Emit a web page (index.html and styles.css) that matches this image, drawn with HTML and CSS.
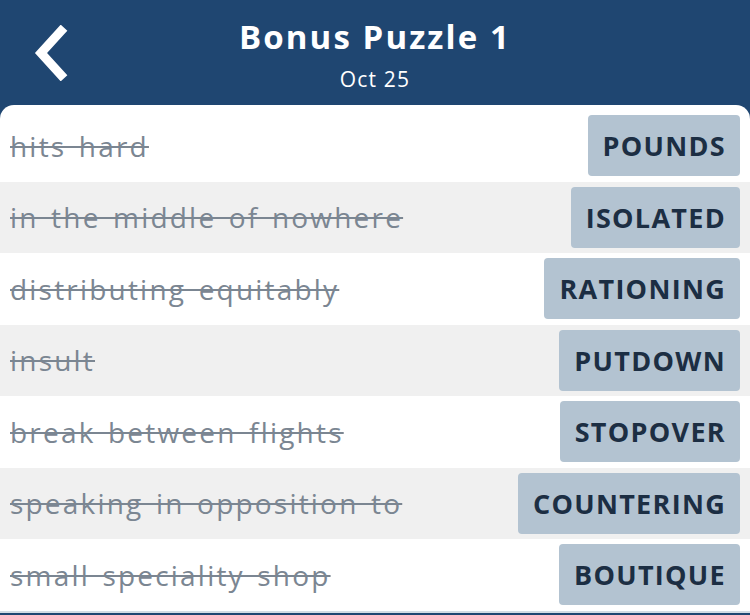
FILE: index.html
```html
<!DOCTYPE html>
<html lang="en">
<head>
  <meta charset="UTF-8">
  <title>Bonus Puzzle 1</title>
  <link rel="stylesheet" href="styles.css">
</head>
<body>
  <header class="topbar">
    <a class="back" href="#">
      <svg width="36" height="56" viewBox="0 0 36 56">
        <path d="M29 6 L9 28 L29 50" fill="none" stroke="#fff" stroke-width="9" stroke-linecap="square" stroke-linejoin="miter"/>
      </svg>
    </a>
    <div class="titles">
      <h1>Bonus Puzzle 1</h1>
      <div class="date">Oct 25</div>
    </div>
  </header>

  <main class="clues">
    <div class="clue"><span class="text">hits hard</span><span class="answer">POUNDS</span></div>
    <div class="clue"><span class="text">in the middle of nowhere</span><span class="answer">ISOLATED</span></div>
    <div class="clue"><span class="text">distributing equitably</span><span class="answer">RATIONING</span></div>
    <div class="clue"><span class="text">insult</span><span class="answer">PUTDOWN</span></div>
    <div class="clue"><span class="text">break between flights</span><span class="answer">STOPOVER</span></div>
    <div class="clue"><span class="text">speaking in opposition to</span><span class="answer">COUNTERING</span></div>
    <div class="clue"><span class="text">small speciality shop</span><span class="answer">BOUTIQUE</span></div>
  </main>
</body>
</html>
```

FILE: styles.css
```css
:root {
  --navy: #1f4671;
  --grey-text: #7b8692;
  --badge: #b3c3d1;
  --badge-text: #1c2e43;
}

body {
  margin: 0;
  background: var(--navy);
  font-family: 'Open Sans', Lato, sans-serif;
  height: 615px;
  overflow: hidden;
}

.topbar {
  height: 105px;
  display: flex;
  align-items: center;
  justify-content: center;
  position: relative;
  color: #fff;
}

.back {
  position: absolute;
  left: 32px;
  top: 25px;
}

.titles {
  text-align: center;
  margin-top: 2px;
}

.titles h1 {
  margin: 0;
  font-size: 33px;
  font-weight: bold;
  letter-spacing: 2.1px;
  line-height: 42px;
}

.date {
  margin-top: 8px;
  font-size: 21px;
  letter-spacing: 1.2px;
  line-height: 26px;
}

.clues {
  background: #fff;
  border-radius: 14px 14px 0 0;
  padding-top: 5px;
  height: 501px;
  border-bottom: 2px solid #d3dce4;
}

.clue {
  height: 71.5px;
  display: flex;
  align-items: center;
  justify-content: space-between;
  padding: 0 10px;
}

.clue:nth-child(even) {
  background: #f0f0f0;
}

.text {
  font-size: 28px;
  letter-spacing: 2.2px;
  word-spacing: 3px;
  color: var(--grey-text);
  text-decoration: line-through;
  text-decoration-thickness: 2px;
}

.answer {
  background: var(--badge);
  color: var(--badge-text);
  font-weight: bold;
  font-size: 27px;
  letter-spacing: 1.3px;
  height: 61px;
  line-height: 61px;
  padding: 0 14px 0 15px;
  border-radius: 4px;
}
```
